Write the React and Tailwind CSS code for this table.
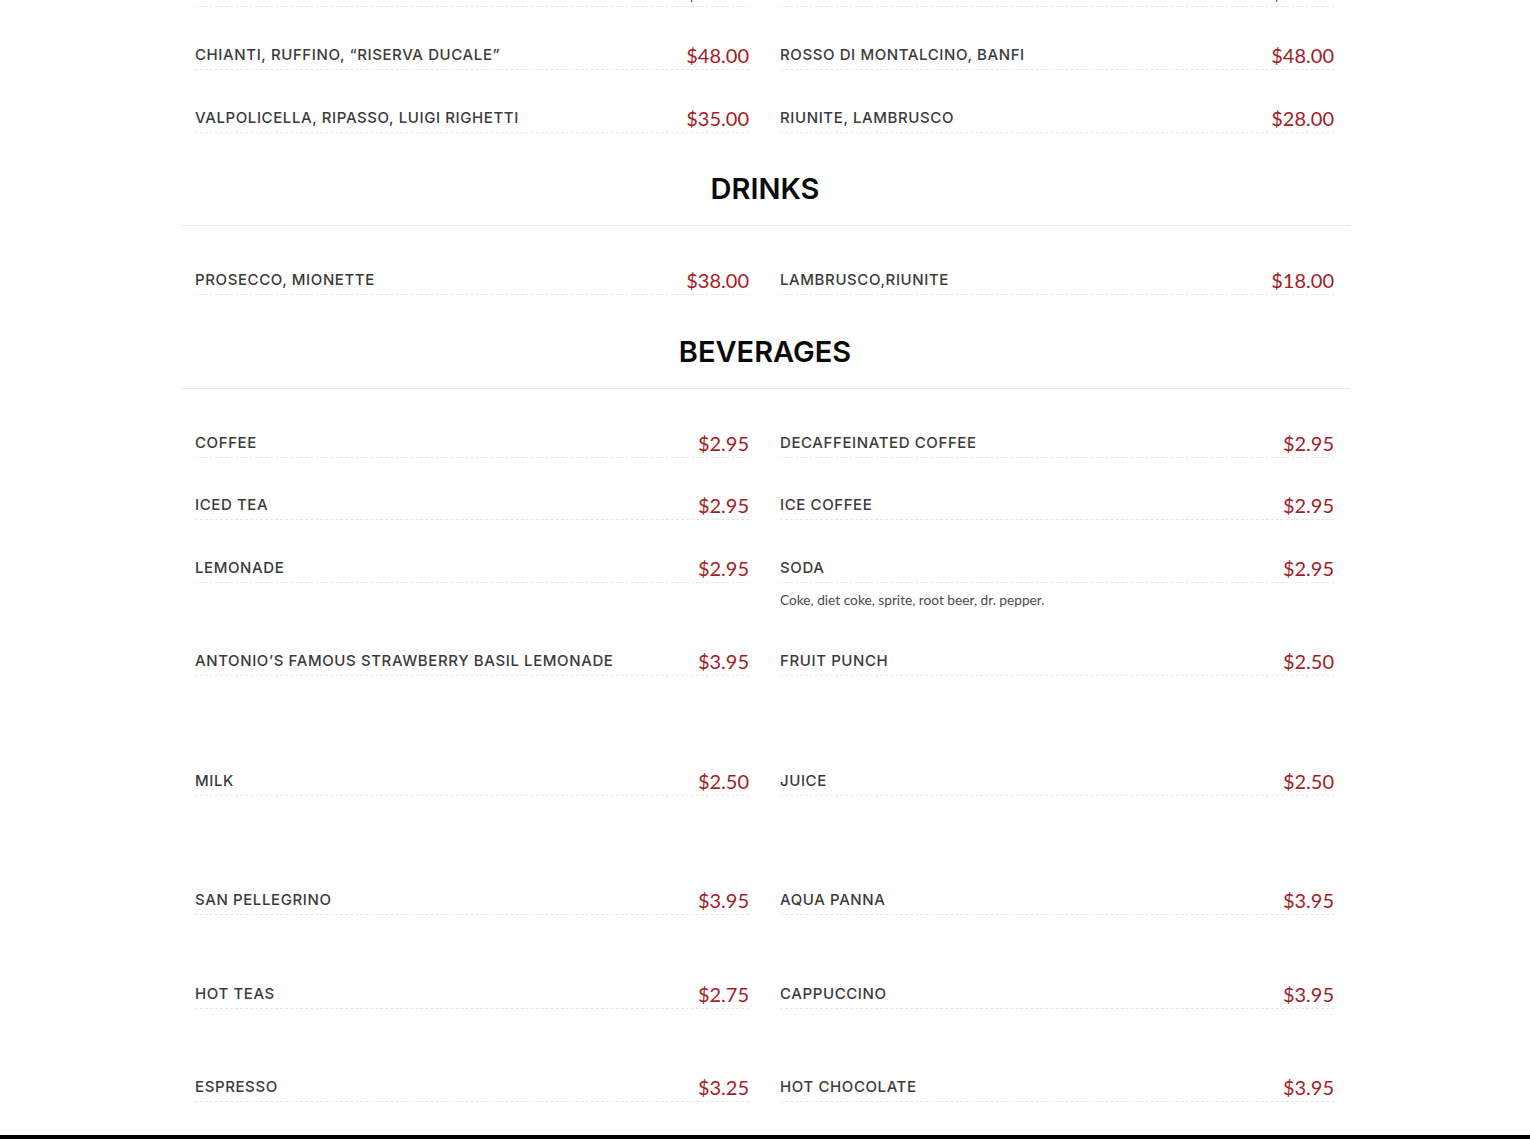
import React from 'react';

const wines = [
    ['BRUNELLO DI MONTALCINO', '$32.00', 'AMARONE DELLA VALPOLICELLA', '$29.00'],
    ['CHIANTI, RUFFINO, “RISERVA DUCALE”', '$48.00', 'ROSSO DI MONTALCINO, BANFI', '$48.00'],
    ['VALPOLICELLA, RIPASSO, LUIGI RIGHETTI', '$35.00', 'RIUNITE, LAMBRUSCO', '$28.00'],
];

const drinks = [['PROSECCO, MIONETTE', '$38.00', 'LAMBRUSCO,RIUNITE', '$18.00']];

// pt per row is written out in full so tailwind picks it up
const beverages = [
    { pt: 'pt-[36px]', left: ['COFFEE', '$2.95'], right: ['DECAFFEINATED COFFEE', '$2.95'] },
    { pt: 'pt-[35px]', left: ['ICED TEA', '$2.95'], right: ['ICE COFFEE', '$2.95'] },
    { pt: 'pt-[36px]', left: ['LEMONADE', '$2.95'], right: ['SODA', '$2.95', 'Coke, diet coke, sprite, root beer, dr. pepper.'] },
    { pt: 'pt-[39px]', left: ['ANTONIO’S FAMOUS STRAWBERRY BASIL LEMONADE', '$3.95'], right: ['FRUIT PUNCH', '$2.50'] },
    { pt: 'pt-[93px]', left: ['MILK', '$2.50'], right: ['JUICE', '$2.50'] },
    { pt: 'pt-[92px]', left: ['SAN PELLEGRINO', '$3.95'], right: ['AQUA PANNA', '$3.95'] },
    { pt: 'pt-[67px]', left: ['HOT TEAS', '$2.75'], right: ['CAPPUCCINO', '$3.95'] },
    { pt: 'pt-[66px]', left: ['ESPRESSO', '$3.25'], right: ['HOT CHOCOLATE', '$3.95'] },
];

function Item({ name, price, desc, pt = 'pt-[36px]' }) {
    return (
        <div className={pt}>
            <div className="flex items-end justify-between border-b border-dashed border-[#e6e6e6] pb-[2px]">
                <span className="mb-[2px] font-['Inter',sans-serif] text-[15px] leading-[20px] font-medium tracking-[0.6px] text-[#3a3a3a]">
                    {name}
                </span>
                <span className="font-['Lato',sans-serif] text-[20px] leading-[24px] text-[#a31d26]">{price}</span>
            </div>
            {desc && (
                <p className="mt-[7px] font-['Lato',sans-serif] text-[13.7px] leading-[20px] text-[#4a4a4a]">{desc}</p>
            )}
        </div>
    );
}

function Heading({ children, mt = 'mt-[36px]' }) {
    return (
        <div className={`${mt} border-b border-[#e9e9e9] pb-[16px] text-center`}>
            <h2 className="font-['Inter',sans-serif] text-[29px] leading-[40px] font-semibold text-[#0a0a0a]">{children}</h2>
        </div>
    );
}

function PairRows({ rows }) {
    return (
        <div className="grid grid-cols-[554px_554px] gap-x-[31px] px-[15px]">
            {rows.map(([ln, lp, rn, rp]) => (
                <React.Fragment key={ln}>
                    <Item name={ln} price={lp} />
                    <Item name={rn} price={rp} />
                </React.Fragment>
            ))}
        </div>
    );
}

export default function App() {
    return (
        <div className="min-h-screen overflow-hidden bg-white">
            <div className="mx-auto -mt-[56px] w-[1170px]">
                <PairRows rows={wines} />

                <Heading>DRINKS</Heading>
                <div className="mt-[6px]">
                    <PairRows rows={drinks} />
                </div>

                <Heading mt="mt-[37px]">BEVERAGES</Heading>
                <div className="mt-[6px] grid grid-cols-[554px_554px] gap-x-[31px] px-[15px]">
                    {beverages.map((row) => (
                        <React.Fragment key={row.left[0]}>
                            <Item name={row.left[0]} price={row.left[1]} desc={row.left[2]} pt={row.pt} />
                            <Item name={row.right[0]} price={row.right[1]} desc={row.right[2]} pt={row.pt} />
                        </React.Fragment>
                    ))}
                </div>
            </div>
            <footer className="mt-[33px] h-[240px] bg-black" />
        </div>
    );
}
